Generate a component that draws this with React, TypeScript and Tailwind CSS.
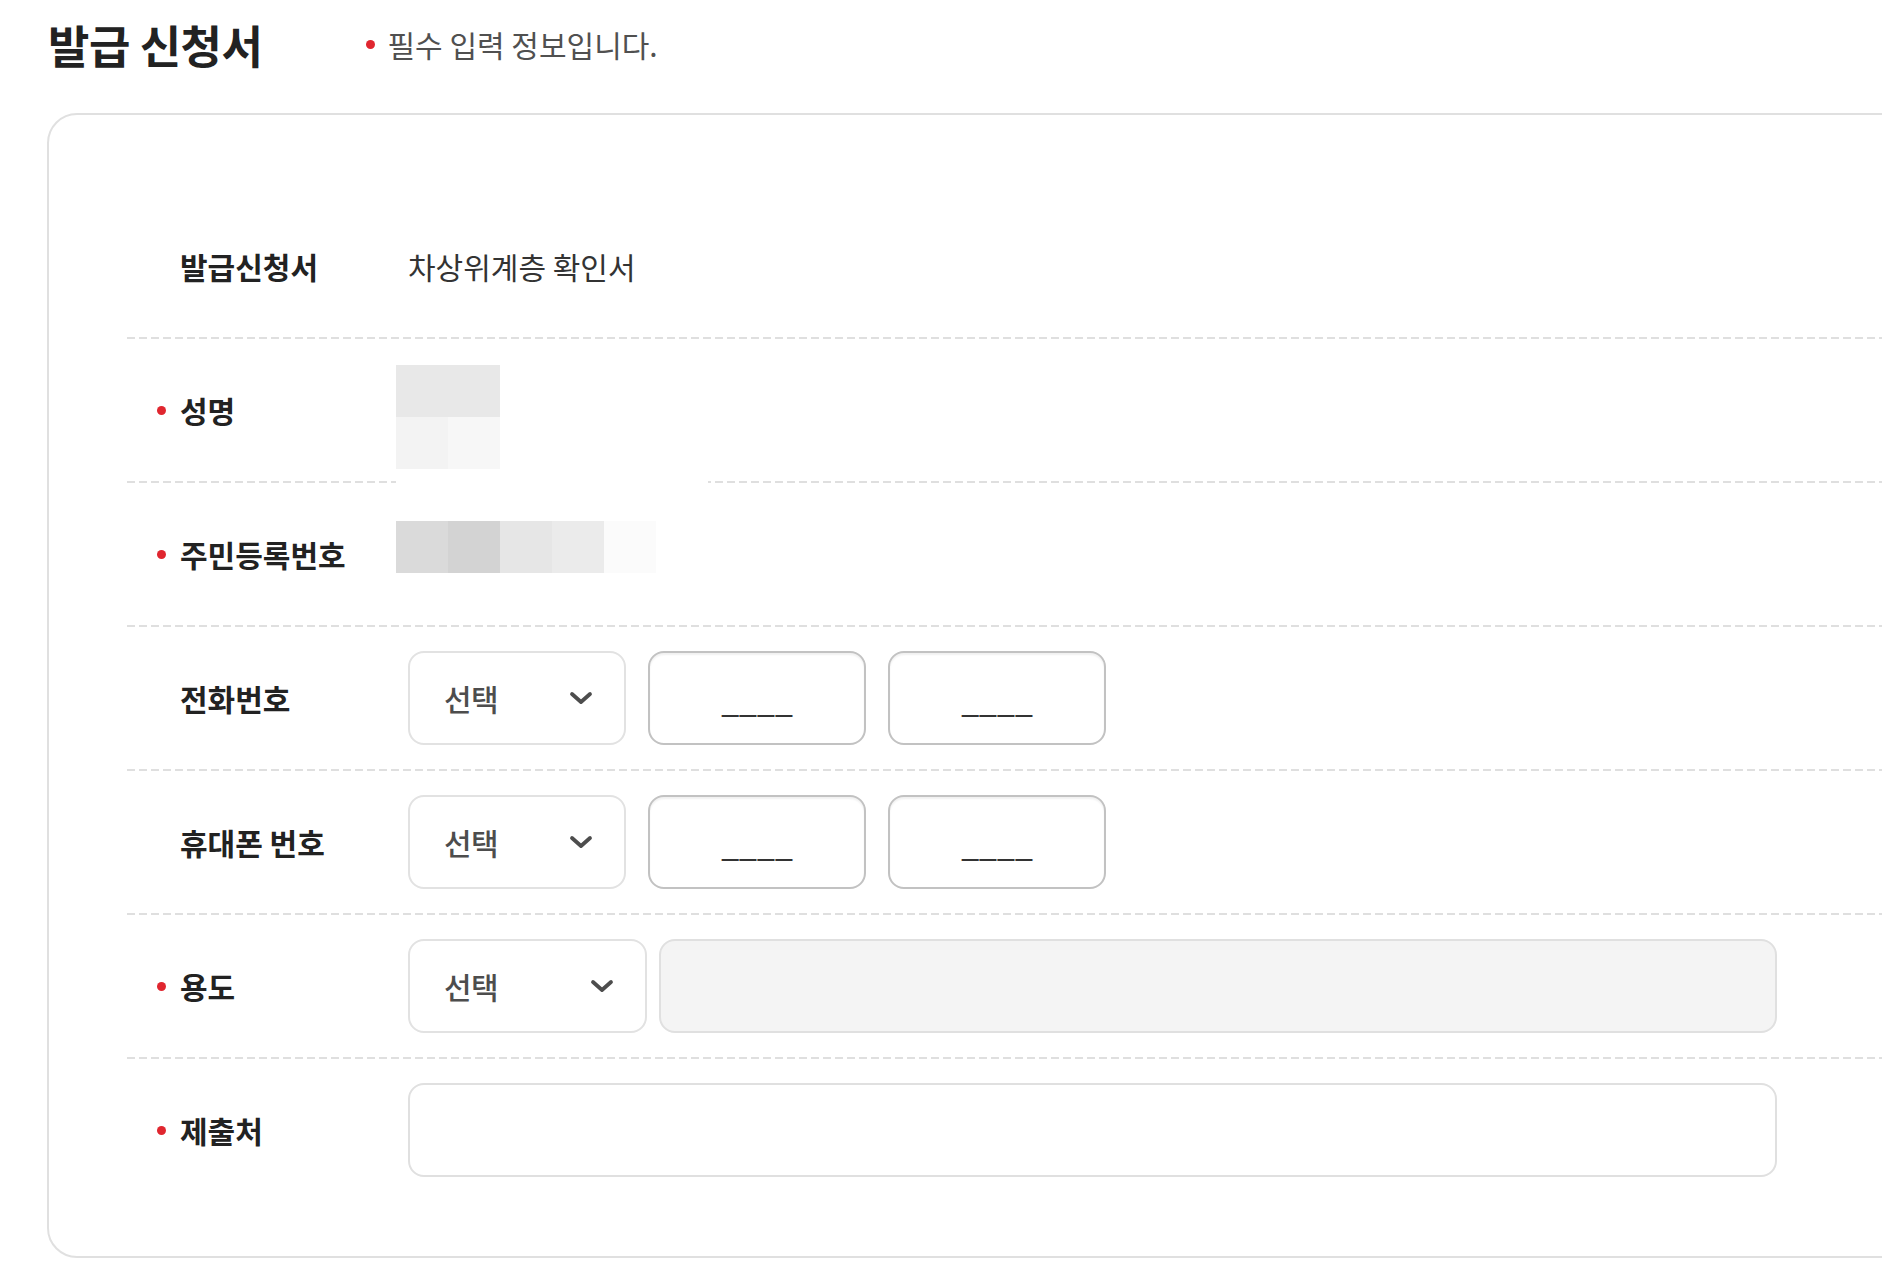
import React from 'react'

const FONT = '"Noto Sans CJK KR", "Noto Sans", sans-serif'

// pixelated blocks that hide the name / resident number (6 x 4, 52px each)
const MOSAIC: string[] = [
  '#e8e8e8', '#e8e8e8', '#ffffff', '#ffffff', '#ffffff', '#ffffff',
  '#f3f3f3', '#f7f7f7', '#ffffff', '#ffffff', '#ffffff', '#ffffff',
  '#ffffff', '#ffffff', '#ffffff', '#ffffff', '#ffffff', '#ffffff',
  '#dadada', '#d3d3d3', '#e6e6e6', '#ebebeb', '#fbfbfb', '#ffffff',
]

function Dashed() {
  return <div className="h-[2px] bg-[repeating-linear-gradient(90deg,#dfdfdf_0_8px,transparent_8px_12px)]" />
}

function Label({ text, required }: { text: string; required?: boolean }) {
  return (
    <div className="flex items-center w-[281px] shrink-0 pl-[30px]">
      <span className="w-[23px] shrink-0 flex items-center">
        {required && <span className="w-[9px] h-[9px] rounded-full bg-[#e0262f]" />}
      </span>
      <span className="text-[30px] font-bold text-[#222]">{text}</span>
    </div>
  )
}

function Chevron() {
  return (
    <svg width="24" height="14" viewBox="0 0 24 14" fill="none">
      <polyline points="3,3 12,11 21,3" stroke="#4d4d4d" strokeWidth="3.8" strokeLinecap="round" strokeLinejoin="round" />
    </svg>
  )
}

function SelectBox({ wide }: { wide?: boolean }) {
  return (
    <div
      className={`${wide ? 'w-[239px]' : 'w-[218px]'} h-[94px] shrink-0 flex items-center justify-between pl-[34px] pr-[31px] border-2 border-[#e2e2e2] rounded-[16px] bg-white`}
    >
      <span className="text-[30px] font-medium tracking-[-0.02em] text-[#4d4d4d]">선택</span>
      <Chevron />
    </div>
  )
}

function PhoneInput() {
  return (
    <input
      className="w-[218px] h-[94px] shrink-0 border-2 border-[#c2c2c2] rounded-[16px] bg-white text-center text-[32px] text-[#333] placeholder:text-[#333] shadow-[inset_0_2px_2px_rgba(0,0,0,0.06)] outline-none"
      style={{ fontFamily: FONT }}
      placeholder="____"
    />
  )
}

function Row({ children }: { children: React.ReactNode }) {
  return <div className="flex items-center h-[142px]">{children}</div>
}

export default function App() {
  return (
    <div className="w-full h-screen overflow-hidden bg-white" style={{ fontFamily: FONT }}>
      <div className="flex items-center h-[88px] pl-[48px]">
        <h1 className="text-[45px] font-bold tracking-[-0.01em] text-[#222] leading-none">발급 신청서</h1>
        <div className="flex items-center ml-[103px]">
          <span className="w-[9px] h-[9px] rounded-full bg-[#e0262f]" />
          <span className="ml-[13px] text-[30px] text-[#505050]">필수 입력 정보입니다.</span>
        </div>
      </div>

      <div className="relative mt-[25px] ml-[47px] w-[1960px] border-2 border-[#e0e0e0] rounded-[30px] pt-[80px] pb-[55px] pl-[78px] pr-[80px]">
        <Row>
          <Label text="발급신청서" />
          <span className="text-[30px] text-[#333]">차상위계층 확인서</span>
        </Row>
        <Dashed />
        <Row>
          <Label text="성명" required />
        </Row>
        <Dashed />
        <Row>
          <Label text="주민등록번호" required />
        </Row>
        <Dashed />
        <Row>
          <Label text="전화번호" />
          <div className="flex gap-[22px]">
            <SelectBox />
            <PhoneInput />
            <PhoneInput />
          </div>
        </Row>
        <Dashed />
        <Row>
          <Label text="휴대폰 번호" />
          <div className="flex gap-[22px]">
            <SelectBox />
            <PhoneInput />
            <PhoneInput />
          </div>
        </Row>
        <Dashed />
        <Row>
          <Label text="용도" required />
          <div className="flex gap-[12px]">
            <SelectBox wide />
            <div className="w-[1118px] h-[94px] border-2 border-[#e0e0e0] rounded-[16px] bg-[#f4f4f4]" />
          </div>
        </Row>
        <Dashed />
        <Row>
          <Label text="제출처" required />
          <input
            className="w-[1369px] h-[94px] border-2 border-[#e0e0e0] rounded-[16px] bg-white outline-none"
          />
        </Row>

        <div className="absolute left-[347px] top-[250px] grid grid-cols-6">
          {MOSAIC.map((c, i) => (
            <div key={i} className="w-[52px] h-[52px]" style={{ background: c }} />
          ))}
        </div>
      </div>
    </div>
  )
}
